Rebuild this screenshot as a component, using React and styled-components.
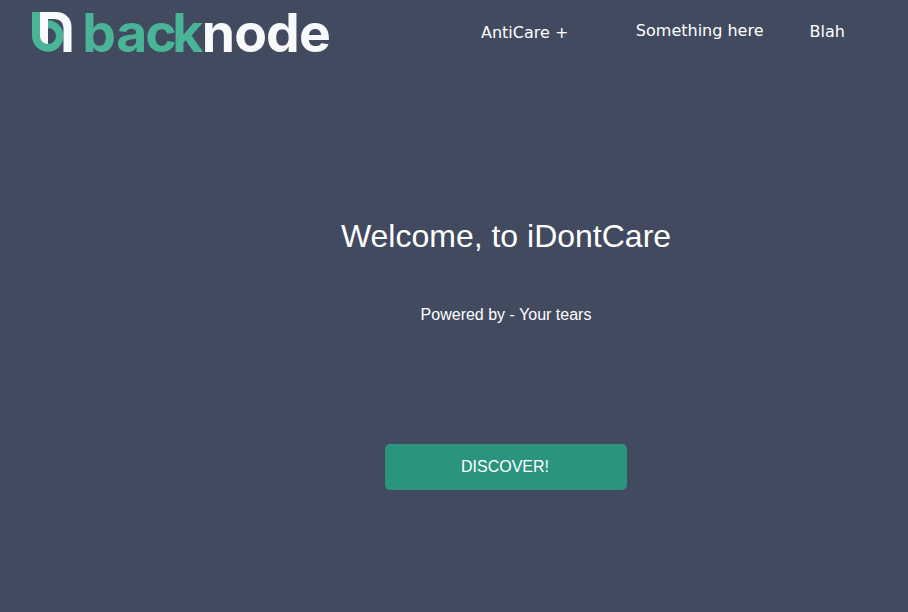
import React from "react";
import styled, { createGlobalStyle } from "styled-components";

const GlobalStyle = createGlobalStyle`
  body {
    margin: 0;
    background: #424a60;
    color: #fff;
    font-family: "Liberation Sans", Arial, sans-serif;
  }
`;

const Page = styled.div`
  box-sizing: border-box;
  height: 612px;
`;

const Header = styled.header`
  display: flex;
  height: 64px;
`;

const Logo = styled.svg`
  display: block;
  flex: none;
  width: 300px;
  height: 42px;
  margin: 11px 0 0 31px;
  overflow: visible;
`;

const Wordmark = styled.text`
  font-family: Inter, sans-serif;
  font-size: 53.5px;
  font-weight: 700;
  fill: ${({ $tone }) => $tone};
`;

const Nav = styled.nav`
  display: flex;
  align-items: flex-start;
  margin-left: 150px;
`;

const NavLink = styled.a`
  margin: ${({ $top }) => $top}px ${({ $gap }) => $gap}px 0 0;
  color: #fff;
  font: 16px/19px "DejaVu Sans", sans-serif;
  white-space: nowrap;
`;

const Hero = styled.main`
  display: flex;
  flex-direction: column;
  align-items: center;
  width: 330px;
  margin-left: 341px;
  padding-top: 154px;
`;

const Title = styled.h1`
  margin: 0;
  font-size: 32px;
  font-weight: 400;
  line-height: 36px;
  white-space: nowrap;
`;

const Tagline = styled.p`
  margin: 52px 0 0;
  font-size: 16px;
  line-height: 18px;
`;

const DiscoverButton = styled.button`
  width: 242px;
  height: 46px;
  margin-top: 120px;
  padding: 0 2px 0 0;
  border: 0;
  border-radius: 5px;
  background: #2b947f;
  color: #fff;
  font: 16px/18px "Liberation Sans", Arial, sans-serif;
`;

const links = [
  { label: "AntiCare +", top: 23, gap: 67.5 },
  { label: "Something here", top: 21, gap: 46 },
  { label: "Blah", top: 22, gap: 0 },
];

function BrandLogo() {
  return (
    <Logo viewBox="31 11 300 42" role="img" aria-label="backnode">
      <path
        fill="#49b596"
        d="M32 12H40V36A7.8 7.8 0 0 0 48 44A8 8 0 0 0 48 28V20.2A15.75 15.75 0 1 1 32 36Z"
      />
      <path
        fill="#f8f9fb"
        d="M40 12H56C65 12 71.5 18 71.5 27V52H63.5V29C63.5 22.5 60 19 54 19H48V44C43.5 44 40 40.5 40 36Z"
      />
      <Wordmark x="82.3 116.2 145.2 172.2" y="51.5" $tone="#49b596">back</Wordmark>
      <Wordmark x="201.8 234.3 266 299" y="51.5" $tone="#f8f9fb">node</Wordmark>
    </Logo>
  );
}

export default function App() {
  return (
    <Page>
      <GlobalStyle />
      <Header>
        <BrandLogo />
        <Nav>
          {links.map(({ label, top, gap }) => (
            <NavLink key={label} $top={top} $gap={gap}>{label}</NavLink>
          ))}
        </Nav>
      </Header>
      <Hero>
        <Title>Welcome, to iDontCare</Title>
        <Tagline>Powered by - Your tears</Tagline>
        <DiscoverButton>DISCOVER!</DiscoverButton>
      </Hero>
    </Page>
  );
}
